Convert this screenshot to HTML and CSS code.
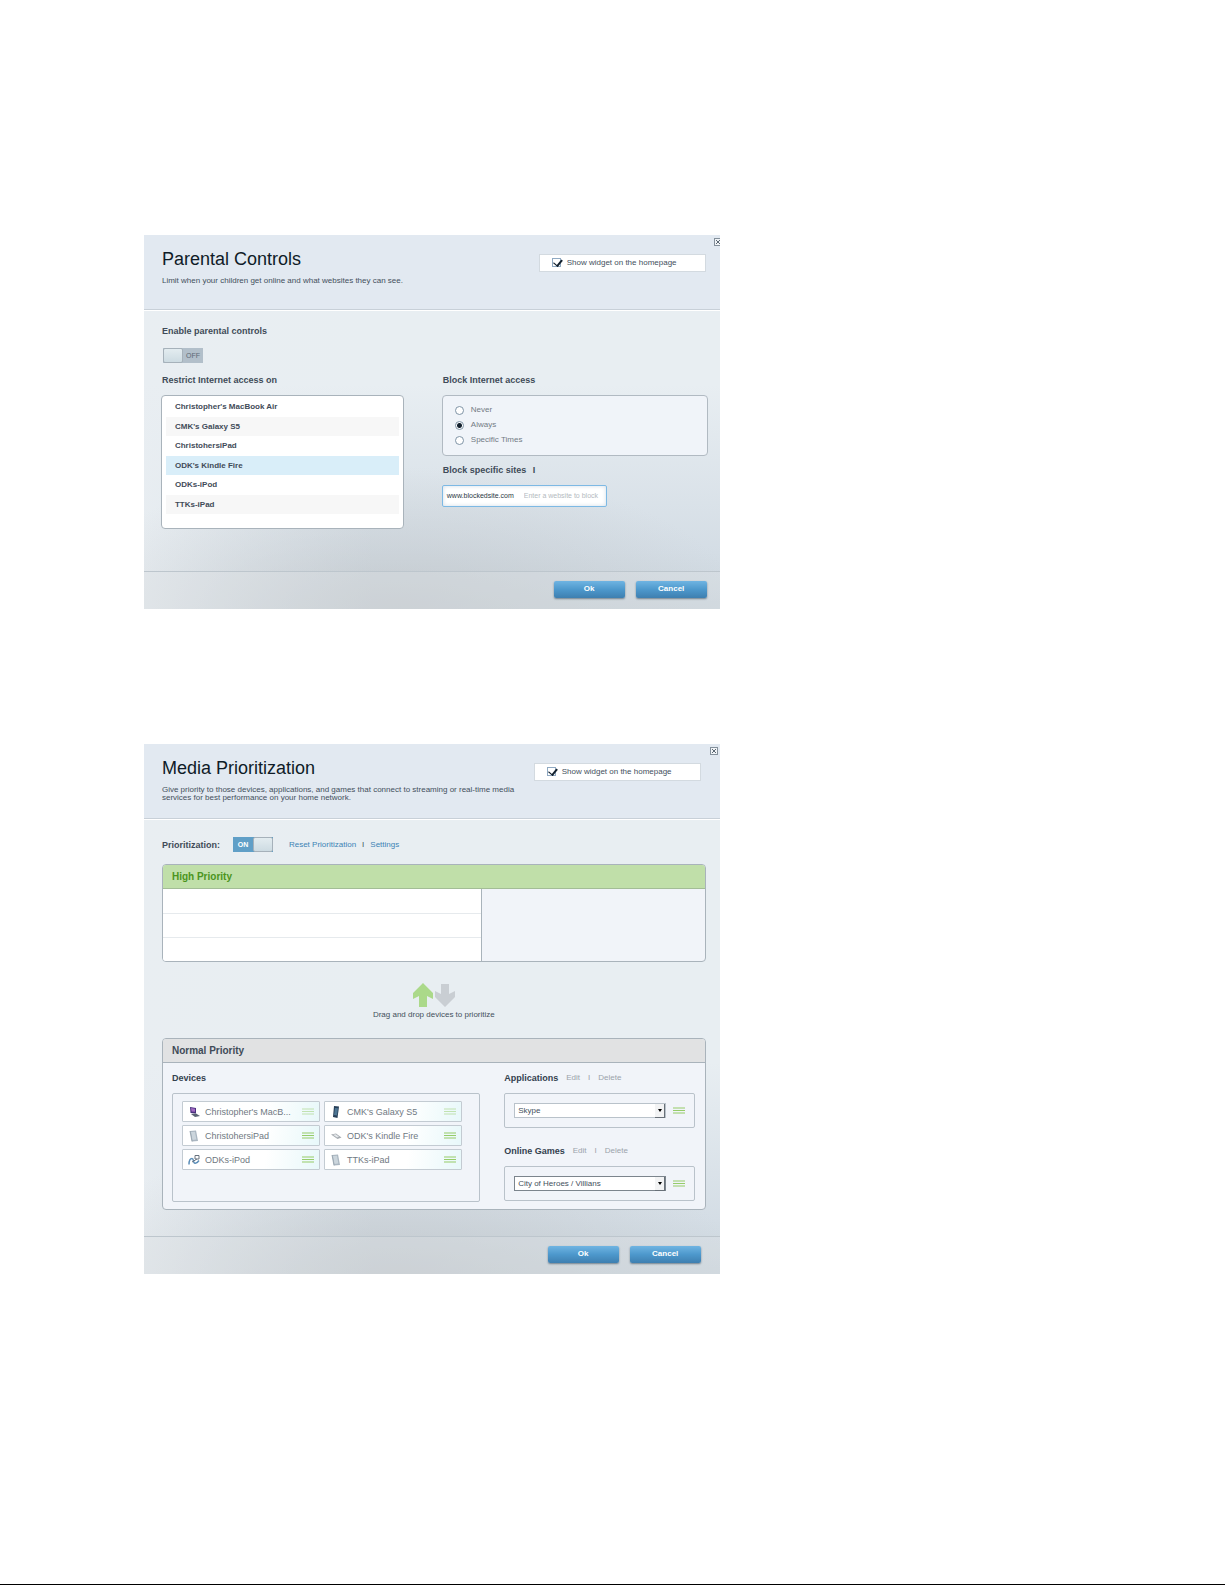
FILE: index.html
```html
<!DOCTYPE html>
<html lang="en">

<head>
    <meta charset="UTF-8">
    <meta name="viewport" content="width=device-width, initial-scale=1.0">
    <title>Router settings</title>
    <link rel="stylesheet" href="styles.css">
</head>

<body>
    <!-- shared icons -->
    <svg class="sprite" aria-hidden="true">
        <symbol id="close" viewBox="0 0 8 8">
            <rect x=".5" y=".5" width="7" height="7" fill="#f1f4f7" stroke="#84909b" />
            <path d="M2 2l4 4M6 2l-4 4" stroke="#5d6974" />
        </symbol>
        <symbol id="grip" viewBox="0 0 12 7">
            <path d="M0 1h12M0 3.5h12M0 6h12" stroke="#96cc69" stroke-width="1.2" />
        </symbol>
        <symbol id="tablet" viewBox="0 0 12 12">
            <path d="M2 1l6-.5L10 11l-6 .5z" fill="#aab6c1" />
            <path d="M3 2l4-.3L8.4 9.5 4.5 10z" fill="#cbd5dc" />
            <path d="M2 1l2 10.5" stroke="#8d9aa6" stroke-width=".8" />
        </symbol>
    </svg>
    <main class="page">
        <!-- parental controls -->
        <section class="panel">
            <header class="panel-head">
                <div class="intro">
                    <h1>Parental Controls</h1>
                    <p>Limit when your children get online and what websites they can see.</p>
                </div>
                <label class="widget"><input type="checkbox" class="check" checked>Show widget on the homepage</label>
                <button class="close edge" aria-label="Close"><svg><use href="#close" /></svg></button>
            </header>
            <div class="panel-body parental">
                <h2>Enable parental controls</h2>
                <button class="toggle off" role="switch" aria-checked="false" aria-label="Enable parental controls"><span class="knob"></span><span class="state">OFF</span></button>
                <div class="cols">
                    <div class="col">
                        <h2>Restrict Internet access on</h2>
                        <ul class="list">
                            <li>Christopher's MacBook Air</li>
                            <li>CMK's Galaxy S5</li>
                            <li>ChristohersiPad</li>
                            <li class="sel">ODK's Kindle Fire</li>
                            <li>ODKs-iPod</li>
                            <li>TTKs-iPad</li>
                        </ul>
                    </div>
                    <div class="col">
                        <h2>Block Internet access</h2>
                        <div class="radios">
                            <label><input type="radio" name="block">Never</label>
                            <label><input type="radio" name="block" checked>Always</label>
                            <label><input type="radio" name="block">Specific Times</label>
                        </div>
                        <h2 class="sites">Block specific sites <span class="bar">I</span></h2>
                        <div class="site-box">
                            <span>www.blockedsite.com</span>
                            <input type="text" placeholder="Enter a website to block" aria-label="Website to block">
                        </div>
                    </div>
                </div>
            </div>
            <footer class="panel-foot">
                <button class="btn">Ok</button>
                <button class="btn">Cancel</button>
            </footer>
        </section>

        <!-- media prioritization -->
        <section class="panel media">
            <header class="panel-head">
                <div class="intro">
                    <h1>Media Prioritization</h1>
                    <p>Give priority to those devices, applications, and games that connect to streaming or real-time media<br>services for best performance on your home network.</p>
                </div>
                <label class="widget"><input type="checkbox" class="check" checked>Show widget on the homepage</label>
                <button class="close" aria-label="Close"><svg><use href="#close" /></svg></button>
            </header>
            <div class="panel-body">
                <div class="tools">
                    <h2>Prioritization:</h2>
                    <button class="toggle on" role="switch" aria-checked="true" aria-label="Prioritization"><span class="state">ON</span><span class="knob"></span></button>
                    <div class="links"><a href="#">Reset Prioritization</a><span>I</span><a href="#">Settings</a></div>
                </div>
                <div class="box high">
                    <h3>High Priority</h3>
                    <div class="slots">
                        <div class="rows">
                            <div class="row"></div>
                            <div class="row"></div>
                            <div class="row"></div>
                        </div>
                        <div class="side"></div>
                    </div>
                </div>
                <div class="drag">
                    <svg viewBox="0 0 44 24">
                        <path d="M11 0L21 10V16L15 13V24H7V13L1 16V10Z" fill="#abd98a" />
                        <path d="M33 24L43 14V8L37 11V1H29V11L23 8V14Z" fill="#c9ced3" />
                    </svg>
                    <p>Drag and drop devices to prioritize</p>
                </div>
                <div class="box normal">
                    <h3>Normal Priority</h3>
                    <div class="groups">
                        <div class="group">
                            <h4>Devices</h4>
                            <div class="well devices">
                                <div class="device">
                                    <svg class="pic" viewBox="0 0 12 12"><path d="M2 1l6 1v5.5L2.5 7z" fill="#49307e" /><path d="M3 2l4 .7v3L3.5 5.5z" fill="#a56bc4" /><path d="M3 8l5-.5 4 2.5-5 1z" fill="#596373" /></svg>
                                    <span>Christopher's MacB...</span><svg class="grip faint"><use href="#grip" /></svg>
                                </div>
                                <div class="device">
                                    <svg class="pic" viewBox="0 0 12 12"><path d="M4 0l5 .5L7.5 12 3 11z" fill="#273f58" /><path d="M5 2l3 .3-1 7.2-3-.5z" fill="#4c7492" /></svg>
                                    <span>CMK's Galaxy S5</span><svg class="grip faint"><use href="#grip" /></svg>
                                </div>
                                <div class="device">
                                    <svg class="pic"><use href="#tablet" /></svg>
                                    <span>ChristohersiPad</span><svg class="grip"><use href="#grip" /></svg>
                                </div>
                                <div class="device">
                                    <svg class="pic" viewBox="0 0 12 12"><path d="M1 4.5l5-1 5.5 4-4 1.5z" fill="#a6abb0" /><path d="M3 4.8l2.800-.6L9 6.800l-2 .7z" fill="#e4e8eb" /></svg>
                                    <span>ODK's Kindle Fire</span><svg class="grip"><use href="#grip" /></svg>
                                </div>
                                <div class="device">
                                    <svg class="pic" viewBox="0 0 12 12" fill="none"><path d="M1 10.5c0-4 1-6 3-6s1 4 2.5 4.5S10 8 11 6.5" stroke="#5d8fb9" stroke-width="1.5" /><path d="M7 1.5h4V5H7zM4 8l5-3" stroke="#68737f" /></svg>
                                    <span>ODKs-iPod</span><svg class="grip"><use href="#grip" /></svg>
                                </div>
                                <div class="device">
                                    <svg class="pic"><use href="#tablet" /></svg>
                                    <span>TTKs-iPad</span><svg class="grip"><use href="#grip" /></svg>
                                </div>
                            </div>
                        </div>
                        <div class="group">
                            <h4><label for="apps">Applications</label> <a href="#">Edit</a><span>I</span><a href="#">Delete</a></h4>
                            <div class="well pick">
                                <div class="select"><select id="apps"><option>Skype</option></select></div>
                                <svg class="grip"><use href="#grip" /></svg>
                            </div>
                            <h4 class="games"><label for="games">Online Games</label> <a href="#">Edit</a><span>I</span><a href="#">Delete</a></h4>
                            <div class="well pick">
                                <div class="select dark"><select id="games"><option>City of Heroes / Villians</option></select></div>
                                <svg class="grip"><use href="#grip" /></svg>
                            </div>
                        </div>
                    </div>
                </div>
            </div>
            <footer class="panel-foot">
                <button class="btn">Ok</button>
                <button class="btn">Cancel</button>
            </footer>
        </section>
    </main>
</body>

</html>
```
FILE: styles.css
```css
* {
    box-sizing: border-box;
}

body {
    margin: 0;
    min-height: 100vh;
    background: #fff;
    border-bottom: 1px solid #000;
    font-family: "Liberation Sans", Arial, sans-serif;
    font-size: 8px;
    color: #43505c;
}

h1,
h2,
h3,
h4,
p,
ul {
    margin: 0;
    padding: 0;
}

button,
input,
select {
    margin: 0;
    font: inherit;
}

a {
    color: #3d83b5;
    text-decoration: none;
}

.sprite {
    display: none;
}

.page {
    width: 47%;
    margin-left: 11.75%;
    padding: 235px 0;
}

/* panel */
.panel {
    background:
        radial-gradient(ellipse 60% 38% at 44% 100%, rgba(190, 194, 197, .6), rgba(200, 205, 208, 0)),
        linear-gradient(90deg, rgba(233, 238, 242, .9), rgba(233, 238, 242, 0) 40%),
        linear-gradient(#e8eef2 40%, #d4dde5 85%, #cbd5dc);
}

.panel.media {
    margin-top: 135px;
    background:
        radial-gradient(ellipse 60% 26% at 44% 100%, rgba(190, 194, 197, .6), rgba(200, 205, 208, 0)),
        linear-gradient(90deg, rgba(233, 238, 242, .9), rgba(233, 238, 242, 0) 40%),
        linear-gradient(#e8eef2 60%, #d4dde5 90%, #cbd5dc);
}

.panel-head {
    position: relative;
    display: flex;
    justify-content: space-between;
    align-items: flex-start;
    height: 76px;
    padding: 12px 14px 0 18px;
    background: #e2e9f1;
    border-bottom: 1px solid #fff;
    box-shadow: inset 0 -1px #c8d0d8;
}

.media .panel-head {
    padding-right: 19px;
}

h1 {
    font-size: 18px;
    line-height: 24px;
    font-weight: normal;
    color: #0f1b27;
}

.intro p {
    margin-top: 6px;
    line-height: 8px;
    white-space: nowrap;
}

.widget {
    display: flex;
    align-items: center;
    width: 167px;
    height: 18px;
    margin-top: 7px;
    padding: 0 0 2px 12px;
    background: #fff;
    border: 1px solid #d3dae0;
}

.check {
    appearance: none;
    position: relative;
    width: 9px;
    height: 9px;
    margin-right: 6px;
    background: #fff;
    border: 1px solid #8fa9c2;
}

.check:checked::after {
    content: "";
    position: absolute;
    left: 2px;
    top: -1px;
    width: 4px;
    height: 7px;
    border: solid #12202e;
    border-width: 0 2px 1px 0;
    transform: rotate(40deg);
}

.close {
    position: absolute;
    top: 3px;
    right: 2px;
    width: 8px;
    height: 8px;
    padding: 0;
    border: 0;
    background: none;
    overflow: hidden;
}

.close.edge {
    right: 0;
    width: 6px;
}

.close svg {
    display: block;
    width: 8px;
    height: 8px;
}

h2 {
    font-size: 9px;
    line-height: 12px;
    color: #3f4b58;
}

/* toggle */
.toggle {
    display: flex;
    width: 40px;
    height: 15px;
    padding: 0;
    border: 0;
    font-size: 7px;
    line-height: 15px;
}

.toggle .knob {
    width: 20px;
    height: 15px;
    background: linear-gradient(#e3ecf0, #cddbe2);
    border: 1px solid #a6b1ba;
    border-radius: 2px;
}

.toggle .state {
    flex: 1;
}

.toggle.off {
    background: #b2bfca;
    color: #5d6975;
}

.toggle.on {
    background: #609fc7;
    color: #fff;
    font-weight: bold;
}

/* parental controls */
.parental {
    padding: 14px 12px 42px 17px;
}

.parental h2 {
    padding-left: 1px;
}

.parental .toggle {
    margin: 11px 0 0 2px;
}

.cols {
    display: grid;
    grid-template-columns: 243fr 266fr;
    gap: 38px;
    margin-top: 11px;
}

.list {
    height: 134px;
    margin-top: 9px;
    padding: 1px 4px;
    list-style: none;
    background: #fff;
    border: 1px solid #a9b3bb;
    border-radius: 4px;
    font-weight: bold;
    color: #3f4b58;
}

.list li {
    height: 20px;
    padding-left: 9px;
    line-height: 20px;
}

.list li:nth-child(even) {
    height: 19px;
    line-height: 19px;
    background: #f7f7f7;
}

.list li.sel,
.list li.sel:nth-child(even) {
    background: #d9eef9;
}

.radios {
    display: flex;
    flex-direction: column;
    gap: 5px;
    margin-top: 9px;
    padding: 9px 12px 10px;
    background: #f0f4f9;
    border: 1px solid #b1bac2;
    border-radius: 4px;
    color: #727b84;
}

.radios label {
    display: flex;
    align-items: center;
    line-height: 10px;
}

.radios input {
    appearance: none;
    width: 9px;
    height: 9px;
    margin-right: 7px;
    border: 1px solid #7f94a6;
    border-radius: 50%;
    background: #fff;
}

.radios input:checked {
    background: radial-gradient(circle, #12202e 2px, #fff 3px);
}

.sites {
    margin-top: 8px;
}

.sites .bar {
    padding-left: 4px;
}

.site-box {
    display: flex;
    align-items: center;
    width: 62%;
    height: 22px;
    margin-top: 9px;
    padding: 0 2px 2px 4px;
    background: #fff;
    border: 1px solid #7db9e4;
    border-radius: 2px;
    box-shadow: inset 0 0 4px #d3dde5;
    font-size: 7px;
    color: #2c3844;
}

.site-box input {
    flex: 1;
    min-width: 0;
    margin-left: 10px;
    padding: 0;
    border: 0;
    background: none;
}

.site-box input::placeholder {
    color: #b4bac0;
}

.panel-foot {
    display: flex;
    justify-content: flex-end;
    gap: 11px;
    height: 38px;
    padding: 9px 13px 0;
    border-top: 1px solid #bdc6cd;
    background: rgba(225, 229, 232, .3);
}

.media .panel-foot {
    padding-right: 19px;
}

.btn {
    width: 71px;
    height: 17px;
    padding: 0 0 2px;
    border: 0;
    border-radius: 2px;
    background: linear-gradient(#6fb4e2, #4d98cc 50%, #3e7fb0);
    box-shadow: 0 1px 2px #71818e;
    color: #fff;
    font-weight: bold;
}

/* media prioritization */
.media .panel-body {
    padding: 17px 14px 26px 18px;
}

.tools {
    display: flex;
    align-items: center;
}

.tools .toggle {
    margin-left: 13px;
}

.links {
    display: flex;
    gap: 6px;
    margin-left: 16px;
}

.box {
    border: 1px solid #a9b3bb;
    border-radius: 4px;
    background: #f1f4f9;
    overflow: hidden;
}

.box h3 {
    height: 24px;
    padding-left: 9px;
    border-bottom: 1px solid #a9b3bb;
    font-size: 10px;
    line-height: 24px;
    background: #e1e2e3;
    color: #3f4b58;
}

.high {
    margin-top: 12px;
}

.high h3 {
    background: #c0dfa9;
    border-bottom-color: #a3bd96;
    color: #4b9420;
}

.slots {
    display: grid;
    grid-template-columns: 320fr 223fr;
}

.rows {
    background: #fff;
    border-right: 1px solid #a9b3bb;
}

.row {
    height: 24px;
}

.row + .row {
    border-top: 1px solid #e6eaed;
}

.drag {
    margin: 21px 0 18px;
    text-align: center;
    line-height: 10px;
}

.drag svg {
    display: block;
    width: 44px;
    height: 24px;
    margin: 0 auto 3px;
}

.groups {
    display: grid;
    grid-template-columns: 309fr 191fr;
    gap: 24px;
    padding: 9px 10px 7px 9px;
}

h4 {
    display: flex;
    font-size: 9px;
    line-height: 12px;
    color: #34414e;
}

h4 a,
h4 span {
    margin-left: 8px;
    font-size: 8px;
    color: #9ba3ab;
    font-weight: normal;
}

.well {
    margin-top: 9px;
    border: 1px solid #b9c2ca;
    border-radius: 2px;
}

.devices {
    display: grid;
    grid-template-columns: 1fr 1fr;
    gap: 3px 4px;
    padding: 7px 17px 31px 9px;
}

.device {
    display: flex;
    align-items: center;
    height: 21px;
    padding: 0 5px;
    background: linear-gradient(100deg, #fff 60%, #e8f8fa);
    border: 1px solid #c3cbd2;
    border-radius: 1px;
    font-size: 9px;
    white-space: nowrap;
    color: #707982;
}

.pic {
    width: 12px;
    height: 12px;
    margin-right: 5px;
}

.grip {
    width: 12px;
    height: 7px;
    margin-left: auto;
}

.grip.faint {
    opacity: .5;
}

.games {
    margin-top: 17px;
}

.pick {
    display: flex;
    align-items: center;
    height: 35px;
    padding: 0 9px;
}

.select {
    position: relative;
    flex: 1;
    margin-right: 7px;
}

.select select {
    appearance: none;
    display: block;
    width: 100%;
    height: 15px;
    padding: 0 12px 0 3px;
    border: 1px solid #b9c2ca;
    border-radius: 0;
    background: #fff;
    color: #43505c;
}

.select.dark select {
    border-color: #7c858d;
}

/* arrow button */
.select::before {
    content: "";
    position: absolute;
    top: 1px;
    right: 1px;
    width: 9px;
    height: 13px;
    background: #f2f3f4;
    border: solid #687078;
    border-width: 0 1px 1px 0;
    pointer-events: none;
}

.select::after {
    content: "";
    position: absolute;
    top: 6px;
    right: 4px;
    border: 2px solid transparent;
    border-top: 3px solid #000;
    border-bottom: 0;
    pointer-events: none;
}
```
